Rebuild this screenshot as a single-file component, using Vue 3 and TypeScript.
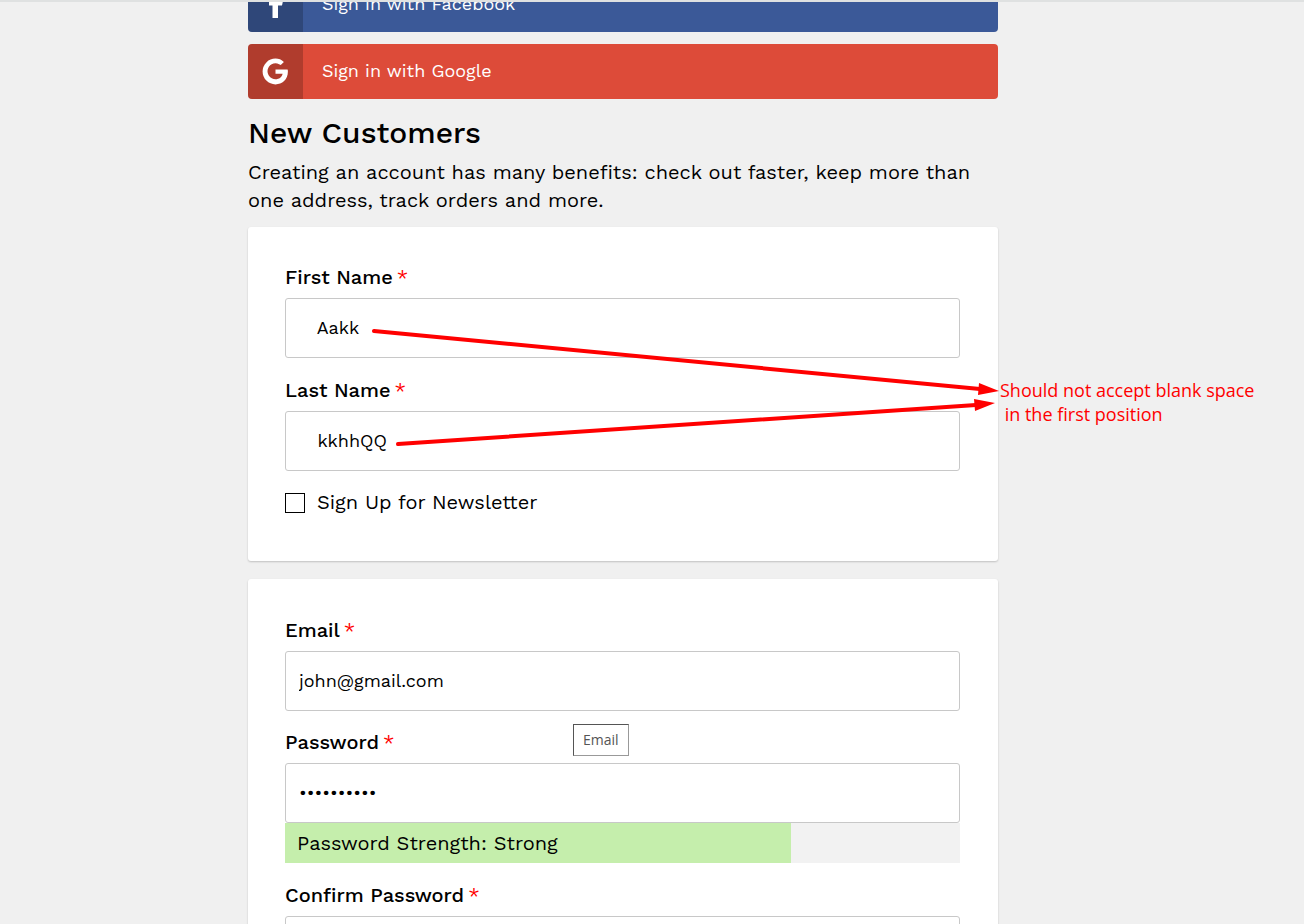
<script setup lang="ts">
import { ref, computed } from 'vue'

const firstName = ref('   Aakk')
const lastName = ref('   kkhhQQ')
const newsletter = ref(false)
const email = ref('john@gmail.com')
const password = ref('Abcd@12345')
const confirmation = ref('')

const strength = computed(() => {
  const length = password.value.length
  if (length >= 10) return { label: 'Strong', percent: 75 }
  if (length >= 6) return { label: 'Medium', percent: 50 }
  return { label: 'Weak', percent: 25 }
})
</script>

<template>
  <div class="page">
    <main class="account">
      <div class="social-list">
        <button type="button" class="social facebook">
          <span class="social-icon">
            <svg width="28" height="28" viewBox="0 0 28 28" aria-hidden="true">
              <path fill="#fff" d="M10.5 27V14.5H7V10h3.5V7c0-4 2-6 6-6H20v4h-2c-2 0-2 1-2 2v3h5l-1 4.5h-4V27z" />
            </svg>
          </span>
          <span class="social-text">Sign in with Facebook</span>
        </button>
        <button type="button" class="social google">
          <span class="social-icon">
            <svg width="28" height="28" viewBox="0 0 28 28" aria-hidden="true">
              <path
                fill="#fff"
                d="M13.5 11.4v4.3h7.1c-.7 3.4-3.4 5.5-7.1 5.5a8 8 0 1 1 5.2-14.1l3.2-3.2A12.9 12.9 0 0 0 13.5.6a12.9 12.9 0 1 0 0 25.8c6.5 0 12.4-4.6 12.4-12.8 0-.7-.1-1.5-.3-2.2z"
              />
            </svg>
          </span>
          <span class="social-text">Sign in with Google</span>
        </button>
      </div>

      <h1>New Customers</h1>
      <p class="intro">
        Creating an account has many benefits: check out faster, keep more than one address, track
        orders and more.
      </p>

      <form @submit.prevent>
        <section class="card">
          <div class="field">
            <label for="first-name">First Name<span class="required">*</span></label>
            <input id="first-name" v-model="firstName" type="text" />
          </div>
          <div class="field">
            <label for="last-name">Last Name<span class="required">*</span></label>
            <input id="last-name" v-model="lastName" type="text" />
          </div>
          <div class="choice">
            <input id="newsletter" v-model="newsletter" type="checkbox" />
            <label for="newsletter">Sign Up for Newsletter</label>
          </div>

          <svg class="arrows" width="750" height="334" viewBox="0 0 750 334" aria-hidden="true">
            <g stroke="#f00" stroke-width="4" stroke-linecap="round">
              <path d="M126 104L732 162" />
              <path d="M150 217L728 178" />
            </g>
            <g fill="#f00">
              <path d="M751 164L730 168L731 156z" />
              <path d="M747 176L727 184L726 172z" />
            </g>
          </svg>
          <p class="note">Should not accept blank space<br />&nbsp;in the first position</p>
        </section>

        <section class="card credentials">
          <div class="field">
            <label for="email">Email<span class="required">*</span></label>
            <input id="email" v-model="email" type="email" />
            <span class="tooltip" role="tooltip">Email</span>
          </div>
          <div class="field">
            <label for="password">Password<span class="required">*</span></label>
            <input id="password" v-model="password" type="password" />
            <div class="meter">
              <div class="meter-fill" :style="{ width: strength.percent + '%' }">
                Password Strength: {{ strength.label }}
              </div>
            </div>
          </div>
          <div class="field">
            <label for="confirmation">Confirm Password<span class="required">*</span></label>
            <input id="confirmation" v-model="confirmation" type="password" />
          </div>
        </section>
      </form>
    </main>
  </div>
</template>

<style>
body {
  background: #f0f0f0;
}
</style>

<style scoped>
* {
  box-sizing: border-box;
}

.page {
  height: 100vh;
  overflow: hidden;
  padding: 0 58px 0 0;
  border-top: 2px solid #dfe1e1;
  background: #f0f0f0;
  color: #000;
  font-family: 'Work Sans', Inter, 'Liberation Sans', sans-serif;
  font-size: 20px;
  font-weight: 400;
  line-height: 28px;
}

.account {
  max-width: 750px;
  margin: -25px auto 0;
}

.social-list {
  display: flex;
  flex-direction: column;
  gap: 12px;
}

.social {
  display: flex;
  align-items: stretch;
  height: 55px;
  padding: 0;
  border: 0;
  border-radius: 4px;
  overflow: hidden;
  color: #fff;
  font-family: inherit;
  font-size: 18px;
  font-weight: 400;
  line-height: 24px;
  text-align: left;
  cursor: pointer;
}

.facebook {
  background: #3b5998;
}

.google {
  background: #dd4b39;
}

.social-icon {
  display: flex;
  align-items: center;
  justify-content: center;
  width: 55px;
  background: rgba(0, 0, 0, 0.2);
}

.social-text {
  align-self: center;
  padding: 0 0 1px 19px;
}

h1 {
  margin: 16px 0 7px;
  font-size: 30px;
  font-weight: 500;
  line-height: 36px;
}

.intro {
  margin: 0 0 13px;
}

.card {
  position: relative;
  margin-bottom: 18px;
  padding: 36px 38px 45px 37px;
  border-radius: 3px;
  background: #fff;
  box-shadow: 0 1px 2px rgba(0, 0, 0, 0.2);
}

.credentials {
  padding-top: 37px;
}

.field {
  position: relative;
  margin-bottom: 18px;
}

.credentials .field:first-child {
  margin-bottom: 17px;
}

.field label {
  display: block;
  margin-bottom: 7px;
  font-weight: 500;
}

.required {
  margin-left: 4px;
  color: #f00;
  font-weight: 400;
}

.field input {
  display: block;
  width: 100%;
  height: 60px;
  padding: 0 13px 2px;
  border: 1px solid #c8c8c8;
  border-radius: 3px;
  outline: 0;
  background: #fff;
  color: #000;
  font-family: inherit;
  font-size: 18px;
  font-weight: 400;
  line-height: 24px;
}

.choice {
  display: flex;
  align-items: center;
  gap: 12px;
  line-height: 27px;
}

.choice input {
  appearance: none;
  width: 20px;
  height: 20px;
  margin: 0;
  border: 1px solid #000;
  background: #fff;
}

.choice input:checked {
  background: #000;
}

.meter {
  background: #f2f2f2;
}

.meter-fill {
  padding: 6px 12px;
  background: #c5eeac;
  white-space: nowrap;
}

.arrows {
  position: absolute;
  top: 0;
  left: 0;
  overflow: visible;
  fill: none;
  pointer-events: none;
}

.note {
  position: absolute;
  top: 151px;
  left: 752px;
  margin: 0;
  color: #f00;
  font: 400 18px/24px 'Open Sans', 'Noto Sans', sans-serif;
  white-space: nowrap;
}

.tooltip {
  position: absolute;
  top: 108px;
  left: 288px;
  z-index: 1;
  padding: 5px 9px;
  border: 1px solid #555;
  border-right-color: #999;
  border-bottom-color: #999;
  background: #fff;
  color: #555;
  font: 400 14px/20px 'Open Sans', 'Noto Sans', sans-serif;
}
</style>
